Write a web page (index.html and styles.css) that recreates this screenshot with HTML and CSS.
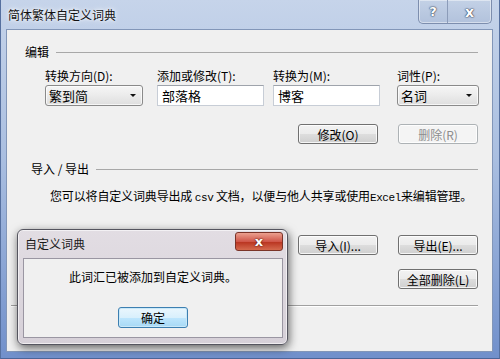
FILE: index.html
```html
<!DOCTYPE html>
<html lang="zh-CN">
<head>
    <meta charset="UTF-8">
    <title>简体繁体自定义词典</title>
    <link rel="stylesheet" href="styles.css">
</head>
<body>
    <div class="window">
        <div class="titlebar">
            <span class="title">简体繁体自定义词典</span>
            <div class="caption-buttons">
                <span class="cap-btn help">?</span>
                <span class="cap-btn close">x</span>
            </div>
        </div>

        <div class="client">
            <!-- 编辑 -->
            <div class="group-head"><span>编辑</span></div>
            <div class="fields">
                <div class="field">
                    <label>转换方向(D):</label>
                    <div class="combo dir">繁到简<span class="arrow"></span></div>
                </div>
                <div class="field">
                    <label>添加或修改(T):</label>
                    <div class="textbox">部落格</div>
                </div>
                <div class="field">
                    <label>转换为(M):</label>
                    <div class="textbox">博客</div>
                </div>
                <div class="field">
                    <label>词性(P):</label>
                    <div class="combo pos">名词<span class="arrow"></span></div>
                </div>
            </div>
            <div class="btn-grid edit-btns">
                <button class="btn">修改(O)</button>
                <button class="btn" disabled>删除(R)</button>
            </div>

            <!-- 导入 / 导出 -->
            <div class="group-head second"><span>导入 / 导出</span></div>
            <p class="desc">您可以将自定义词典导出成 <span class="mono">csv</span> 文档，以便与他人共享或使用<span class="mono">Excel</span>来编辑管理。</p>
            <div class="btn-grid io-btns">
                <button class="btn">导入(I)...</button>
                <button class="btn">导出(E)...</button>
                <button class="btn wide">全部删除(L)</button>
            </div>

            <div class="sep"></div>
        </div>
    </div>

    <!-- message box on top -->
    <div class="msgbox">
        <div class="msg-titlebar">
            <span class="msg-title">自定义词典</span>
            <span class="msg-close">x</span>
        </div>
        <div class="msg-body">
            <p class="msg-text">此词汇已被添加到自定义词典。</p>
            <button class="btn default">确定</button>
        </div>
    </div>
</body>
</html>
```

FILE: styles.css
```css
body {
    margin: 0;
    font-family: "Noto Sans CJK SC", "Liberation Sans", sans-serif;
    font-size: 12px;
    color: #000;
    background: #7896cc;
}

.window {
    position: relative;
    width: 500px;
    height: 359px;
    box-sizing: border-box;
    display: flex;
    flex-direction: column;
    background: linear-gradient(#c6d4ea, #a9bee0 45%, #7190cb);
    border-left: 1px solid #56709f;
    border-right: 1px solid #56709f;
    border-bottom: 1px solid #4d6597;
}

.titlebar {
    height: 29px;
    display: flex;
    justify-content: space-between;
    align-items: flex-start;
    padding: 0 7px 0 7px;
}

.title {
    line-height: 16px;
    padding-top: 7px;
    color: #111;
    text-shadow: 0 0 6px #fff, 0 0 3px #fff;
}

.caption-buttons {
    display: flex;
    height: 23px;
    border: 1px solid #7d8eae;
    border-top: none;
    border-radius: 0 0 5px 5px;
    background: linear-gradient(#c3d1e6, #b2c2dc);
    box-shadow: inset 0 0 0 1px rgba(255, 255, 255, 0.45);
    overflow: hidden;
}

.cap-btn {
    display: flex;
    align-items: center;
    justify-content: center;
    font-family: "DejaVu Sans", sans-serif;
    font-weight: bold;
    color: #fff;
    text-shadow: 0 0 1px #3c4a60, 0 0 1px #3c4a60, 0 0 2px #3c4a60;
}

.help {
    width: 28px;
    font-size: 13px;
    border-right: 1px solid #8c9cb9;
}

.close {
    width: 43px;
    font-size: 14px;
}

.client {
    flex: 1;
    margin: 0 6px 6px 5px;
    background: #f0f0f0;
    border: 1px solid #8296b8;
    padding: 14px 14px 0 18px;
}

.group-head {
    display: flex;
    align-items: center;
    line-height: 16px;
    height: 16px;
}

.group-head::after {
    content: "";
    flex: 1;
    height: 1px;
    background: #a8a8a8;
    margin-left: 7px;
}

.group-head.second {
    margin-top: 17px;
    padding-left: 6px;
}

.fields {
    display: grid;
    grid-template-columns: 112px 116px 124px 82px;
    margin: 8px 0 0 20px;
}

.field label {
    display: block;
    line-height: 16px;
    margin-bottom: 1px;
}

.combo,
.textbox {
    height: 21px;
    box-sizing: border-box;
    line-height: 19px;
    font-size: 13px;
}

.combo {
    position: relative;
    padding-left: 3px;
    border: 1px solid #8a8a8a;
    border-radius: 3px;
    background: linear-gradient(#f6f6f6, #ebebeb 50%, #dedede);
    box-shadow: inset 0 0 0 1px rgba(255, 255, 255, 0.7);
}

.combo.dir {
    width: 98px;
}

.combo.pos {
    width: 82px;
}

.arrow {
    position: absolute;
    right: 6px;
    top: 8px;
    border-left: 3px solid transparent;
    border-right: 3px solid transparent;
    border-top: 3px solid #111;
}

.textbox {
    width: 107px;
    padding-left: 4px;
    background: #fff;
    border: 1px solid #c7cdd6;
    border-top-color: #9ea3ab;
}

.btn-grid {
    display: grid;
    grid-template-columns: 80px 80px;
    column-gap: 20px;
    row-gap: 14px;
    justify-content: end;
}

.edit-btns {
    margin-top: 18px;
}

.io-btns {
    margin-top: 29px;
}

.btn {
    height: 20px;
    padding: 0;
    font-family: inherit;
    font-size: 12px;
    color: #000;
    border: 1px solid #707070;
    border-radius: 3px;
    background: linear-gradient(#f2f2f2, #ebebeb 50%, #dddddd 51%, #cfcfcf);
    box-shadow: inset 0 0 0 1px rgba(255, 255, 255, 0.8);
}

.btn:disabled {
    color: #8d8d8d;
    border-color: #adb2b5;
    background: #f4f4f4;
}

.btn.wide {
    grid-column: 2;
}

.desc {
    margin: 11px -6px 0 25px;
    line-height: 16px;
    white-space: nowrap;
    letter-spacing: -0.15px;
}

.mono {
    font-family: "Liberation Mono", monospace;
    font-size: 11px;
    letter-spacing: -0.4px;
}

.sep {
    margin: 16px 0 0 -14px;
    height: 1px;
    background: #a0a0a0;
    border-bottom: 1px solid #fff;
}

/* message box window */
.msgbox {
    position: absolute;
    left: 17px;
    top: 229px;
    width: 271px;
    height: 116px;
    box-sizing: border-box;
    display: flex;
    flex-direction: column;
    border: 1px solid #55555f;
    border-radius: 6px;
    background: linear-gradient(#e2dde3, #d6d0d8);
    box-shadow: 1px 3px 10px rgba(0, 0, 0, 0.6), inset 0 0 0 1px rgba(255, 255, 255, 0.6);
}

.msg-titlebar {
    height: 28px;
    display: flex;
    justify-content: space-between;
    align-items: flex-start;
    padding: 0 4px 0 7px;
}

.msg-title {
    line-height: 16px;
    padding-top: 6px;
    color: #1a1a1a;
}

.msg-close {
    width: 46px;
    height: 17px;
    margin-top: 2px;
    display: flex;
    align-items: center;
    justify-content: center;
    font-family: "DejaVu Sans", sans-serif;
    font-weight: bold;
    font-size: 13px;
    color: #fff;
    text-shadow: 0 0 1px #5a1a10, 0 0 2px #5a1a10;
    border: 1px solid #7a3328;
    border-radius: 3px;
    background: linear-gradient(#eba08f, #d0574a 50%, #b8321f 51%, #d56a4e);
}

.msg-body {
    flex: 1;
    margin: 0 4px 6px 5px;
    background: #f0f0f0;
    border: 1px solid #9a96a2;
    display: flex;
    flex-direction: column;
    align-items: center;
}

.msg-text {
    margin: 10px 0 0 0;
    line-height: 16px;
}

.btn.default {
    width: 70px;
    height: 21px;
    margin-top: 22px;
    border-color: #3c7fb1;
    background: linear-gradient(#eaf6fd, #d9f0fc 50%, #bee6fd 51%, #a7d9f5);
    box-shadow: inset 0 0 0 1px #c9e8f8;
}
```
